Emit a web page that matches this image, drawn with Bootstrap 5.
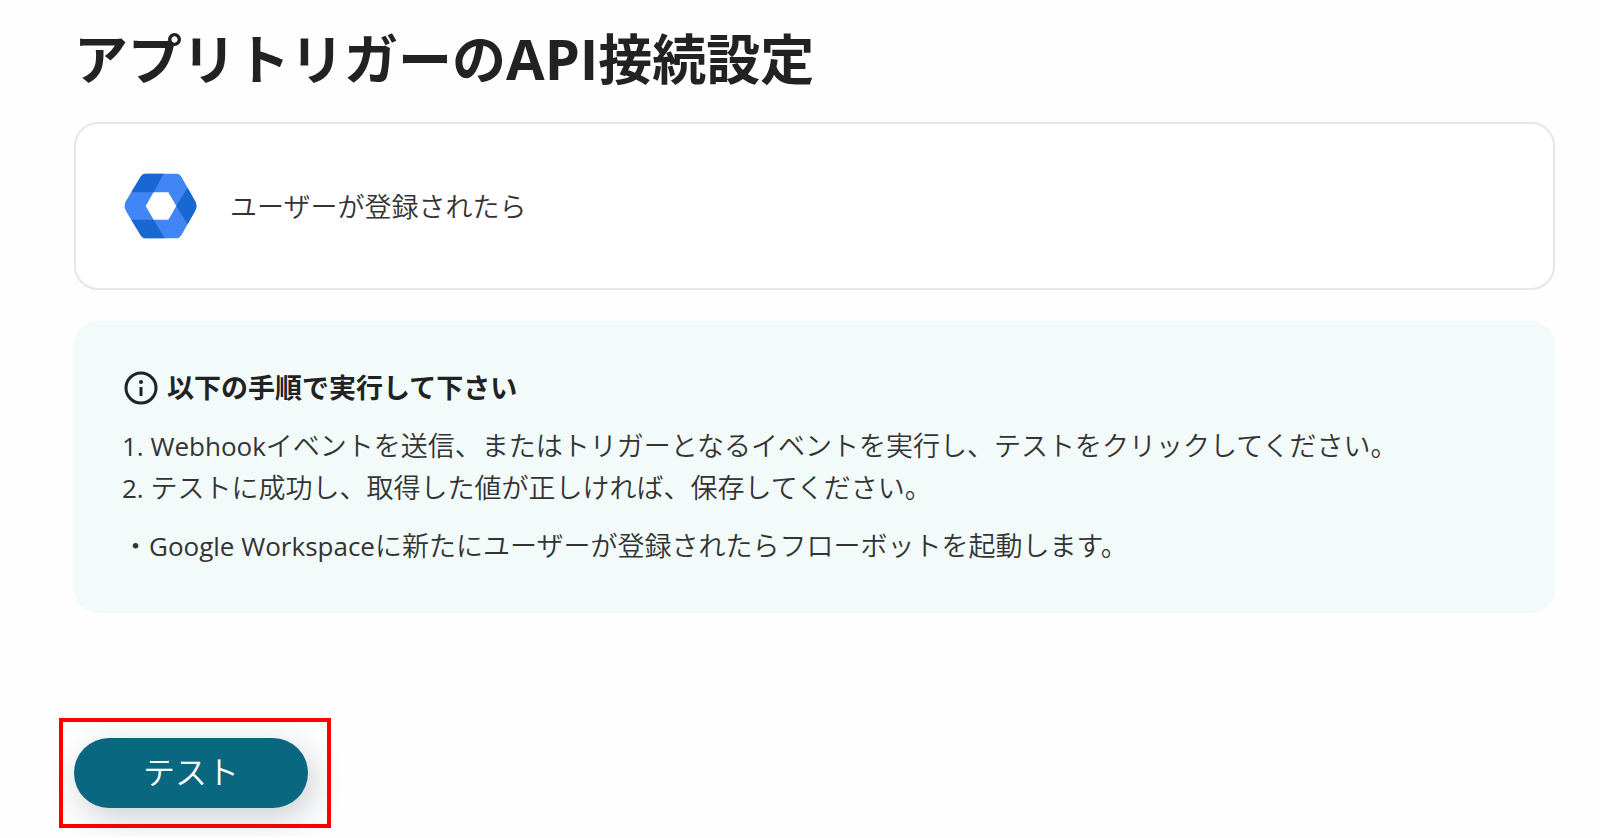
<!DOCTYPE html>
<html lang="ja">
<head>
<meta charset="utf-8">
<meta name="viewport" content="width=device-width, initial-scale=1">
<title>アプリトリガーのAPI接続設定</title>
<link href="https://cdn.jsdelivr.net/npm/bootstrap@5.3.0/dist/css/bootstrap.min.css" rel="stylesheet">
<style>
  body { font-family: "Noto Sans CJK JP", sans-serif; font-size: 27px; font-weight: 350; line-height: 42px; color: #333; background: #fefefe; }
  .page { padding: 17px 45px 8px 74px; }
  .latin { font-family: "Open Sans", sans-serif; font-size: 26px; font-weight: 400; line-height: 1; }
  .page-title { font-size: 54px; line-height: 80px; font-weight: 700; color: #222; margin-bottom: 25px; }
  .page-title .latin { font-size: 56px; font-weight: 700; }
  .panel { border: 0; border-radius: 24px; padding: 48px; }
  .panel-app { border: 2px solid #e6e6e6; background: #fff; margin-bottom: 31px; }
  .app-row { gap: 33px; }
  .panel-info { background: #f2fbfa; padding-top: 45px; padding-bottom: 47px; margin-bottom: 105px; }
  .panel-info h2 { font-size: 27px; line-height: 42px; font-weight: 700; color: #222; margin-bottom: 16px; gap: 8px; }
  .panel-info p { margin-bottom: 16px; }
  .highlight-box { border: 4px solid #f00; padding: 16px 19px 16px 11px; margin-left: -15px; }
  .btn-test { width: 234px; height: 70px; background: #0a6780; color: #fff; font-size: 32px; font-weight: 350; line-height: 48px; box-shadow: 6px 10px 32px rgba(40, 60, 80, .24); }
  .btn-test span { display: block; padding-bottom: 6px; }
  .btn-test:hover { background: #085468; color: #fff; }
</style>
</head>
<body>
<main class="page">
  <h1 class="page-title">アプリトリガーの<span class="latin">API</span>接続設定</h1>

  <section class="card panel panel-app">
    <div class="app-row d-flex align-items-center">
      <svg width="73" height="68" viewBox="0 0 74 68" aria-hidden="true">
        <defs><clipPath id="hex"><path d="M22 1h31q3 0 5 3l14 25q3 5 0 10L58 64q-2 3-5 3H22q-3 0-5-3L2 39q-3-5 0-10L17 4q2-3 5-3Z"/></clipPath></defs>
        <g clip-path="url(#hex)">
          <path fill="#4285f4" d="M0 0h74v68H0Z"/>
          <path fill="#1967d2" d="M0 0h41L30 20H0ZM0 48h30l12 20H0ZM53 34 64 16 80 16V52H64Z"/>
        </g>
        <path fill="#fff" d="M30 20h15l8 14-8 14H30l-8-14Z"/>
      </svg>
      <span>ユーザーが登録されたら</span>
    </div>
  </section>

  <section class="card panel panel-info">
    <h2 class="d-flex align-items-center">
      <svg width="37" height="35" viewBox="0 0 37 35" aria-hidden="true">
        <circle cx="19" cy="18" r="15" fill="none" stroke="#222" stroke-width="3"/>
        <circle cx="19" cy="12" r="2" fill="#222"/><path d="M19 17v9" stroke="#222" stroke-width="3"/>
      </svg>
      <span>以下の手順で実行して下さい</span>
    </h2>
    <p><span class="latin">1. Webhook</span>イベントを送信、またはトリガーとなるイベントを実行し、テストをクリックしてください。<br>
    <span class="latin">2. </span>テストに成功し、取得した値が正しければ、保存してください。</p>
    <p class="mb-0">・<span class="latin">Google Workspace</span>に新たにユーザーが登録されたらフローボットを起動します。</p>
  </section>

  <div class="highlight-box d-inline-flex">
    <button type="button" class="btn btn-test rounded-pill border-0 p-0"><span>テスト</span></button>
  </div>
</main>
<script src="https://cdn.jsdelivr.net/npm/bootstrap@5.3.0/dist/js/bootstrap.bundle.min.js"></script>
</body>
</html>
